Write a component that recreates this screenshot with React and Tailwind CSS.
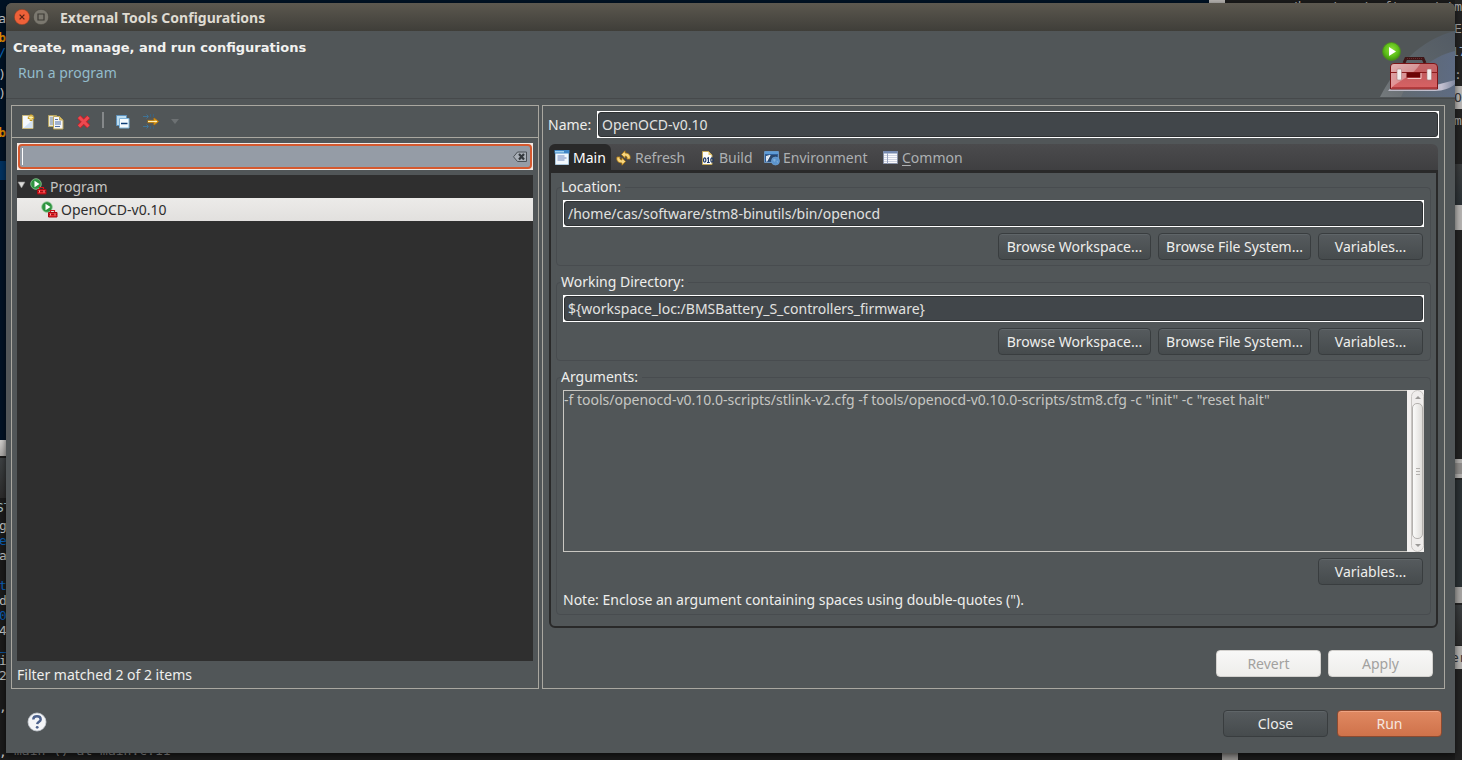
import React, { useState } from "react";

/* ---------- desktop behind the dialog ---------- */

function Backdrop() {
  return (
    <div aria-hidden="true" className="absolute inset-0 overflow-hidden bg-[#1b1b1b] font-['DejaVu_Sans_Mono','monospace'] text-[13px] leading-4">
      <div className="absolute left-0 top-0 h-[440px] w-[1209px] bg-[#001224]" />
      <div className="absolute left-[1209px] top-0 h-2 w-4 bg-[#b5b2af]" />
      <div className="absolute left-0 top-[161px] h-[19px] w-2 bg-[#003260]" />
      <div className="absolute left-0 top-[440px] h-4 w-2 bg-linear-to-b from-[#d2d0ce] to-[#a9a7a5]" />
      <div className="absolute left-0 top-[458px] h-[40px] w-2 bg-linear-to-b from-[#3d4143] to-[#2c2c2c]" />
      <div className="absolute left-0 top-[652px] h-px w-2 bg-[#0b4f94]" />
      <div className="absolute inset-y-0 left-0 w-[6px] overflow-hidden">
        <div className="absolute right-0 top-[11px] text-[#c9c9c9]">a</div>
        <div className="absolute right-0 top-[30px] font-bold text-[#e08a00]">b</div>
        <div className="absolute right-0 top-[45px] text-[#0b66b8]">/</div>
        <div className="absolute right-0 top-[67px] text-[#c9c9c9]">)</div>
        <div className="absolute right-0 top-[86px] text-[#c9c9c9]">)</div>
        <div className="absolute right-0 top-[125px] font-bold text-[#e08a00]">b</div>
        <div className="absolute -left-1 top-[500px] text-[#a8c3c9]">ST</div>
        <div className="absolute -left-px top-[518px] text-[#c4c4c4]">g</div>
        <div className="absolute -left-px top-[533px] text-[#0a5fb4]">e</div>
        <div className="absolute -left-px top-[548px] text-[#c4c4c4]">a</div>
        <div className="absolute -left-px top-[578px] text-[#0a5fb4]">t</div>
        <div className="absolute -left-px top-[593px] text-[#c4c4c4]">d</div>
        <div className="absolute -left-px top-[608px] text-[#0a5fb4]">0</div>
        <div className="absolute -left-px top-[623px] text-[#c4c4c4]">4</div>
        <div className="absolute -left-px top-[653px] text-[#c4c4c4]">i</div>
        <div className="absolute -left-px top-[668px] text-[#c4c4c4]">2</div>
        <div className="absolute -left-px top-[699px] text-[#c4c4c4]">,</div>
        <div className="absolute -left-px top-[744px] text-[#c4c4c4]">,</div>
      </div>
      <div className="absolute left-[14px] top-[743px] whitespace-pre text-[#8b8b8b]">main () at main.c:11</div>
      <div className="absolute left-[1222px] top-[752px] h-2 w-4 bg-[#8d8b89]" />
      <div className="absolute inset-y-0 right-0 w-[7px] overflow-hidden bg-[#232323]">
        <div className="absolute inset-x-0 top-[86px] h-[23px] bg-[#b9b6b4]" />
        <div className="absolute inset-x-0 top-[164px] h-[41px] bg-linear-to-b from-[#3a3c3d] to-[#2b3135]" />
        <div className="absolute inset-x-0 top-[205px] h-[25px] bg-[#b4b2b0]" />
        <div className="absolute inset-x-0 top-[459px] h-[19px] border-y-4 border-[#b0aeac] bg-[#8f8d8b]" />
        <div className="absolute inset-x-0 top-[480px] h-[107px] bg-[#2b3134]" />
        <div className="absolute inset-x-0 top-[587px] h-4 bg-[#a5a3a1]" />
        <div className="absolute inset-x-0 top-[605px] h-[40px] bg-linear-to-b from-[#3a3d3f] to-[#2b2b2b]" />
        <div className="absolute inset-x-0 top-[646px] h-[23px] bg-[#b4b2b0]" />
        <div className="absolute -left-px top-[21px] text-[#a8a8a8]">E</div>
        <div className="absolute -left-1 top-[44px] text-[#8fa9c4]">17</div>
        <div className="absolute -left-px top-[67px] text-[#a8a8a8]">:</div>
        <div className="absolute -left-px top-[90px] text-[#33373a]">O</div>
        <div className="absolute -left-px top-[113px] text-[#a8a8a8]">m</div>
        <div className="absolute -left-1 top-[650px] text-[#33373a]">er</div>
      </div>
      <div className="absolute left-[1290px] top-[-1px] whitespace-pre text-[#a8a8a8]">/home/cas/software/stm</div>
    </div>
  );
}

/* ---------- icons ---------- */

const NewIcon = () => (
  <svg width="16" height="16" viewBox="0 0 16 16">
    <path d="M2.500 1.500h10.500v13h-10.500z" fill="#f6f9fd" stroke="#c9b77a" />
    <path d="M3.500 14h9V6z" fill="#d3e2f4" />
    <path d="M11 .5v6.500M7.800 3.700h6.400" stroke="#c99a1c" strokeWidth="2.600" />
    <path d="M11 1.500v4.500M8.800 3.700h4.400" stroke="#fff2a8" strokeWidth="1.200" />
  </svg>
);

const CopyIcon = () => (
  <svg width="16" height="16" viewBox="0 0 16 16">
    <path d="M.5 1.500h8v11h-8z" fill="#e9e6d4" stroke="#b8a663" />
    <path d="M2 4h3M2 6h3M2 8h3M2 10h3" stroke="#6e88b8" />
    <path d="M5.500 2.500h6l3.500 3.500v9h-9.500z" fill="#f5f6fa" stroke="#c0a85a" />
    <path d="M11.500 2.500v3.500H15z" fill="#e6c66a" stroke="#c0a85a" />
    <path d="M7 5.500h3M7 8h6M7 10h6M7 12.500h5" stroke="#4f6ea8" />
  </svg>
);

const DeleteIcon = () => (
  <svg width="16" height="16" viewBox="0 0 16 16">
    <path d="M3 3 12.500 12.500M12.500 3 3 12.500" stroke="#c0242b" strokeWidth="4.600" />
    <path d="M3 3 12.500 12.500M12.500 3 3 12.500" stroke="#ee4950" strokeWidth="3" />
  </svg>
);

const CollapseIcon = () => (
  <svg width="16" height="16" viewBox="0 0 16 16">
    <path d="M2.500 1.500h10v10h-10z" fill="#bcdcf0" stroke="#5f93bd" />
    <path d="M5.500 4.500h9.500v9.500h-9.500z" fill="#f4fbff" stroke="#7fb4da" />
    <path d="M7 9.500h6.500" stroke="#0d3f78" strokeWidth="1.500" />
  </svg>
);

const FilterIcon = () => (
  <svg width="18" height="16" viewBox="0 0 18 16" fill="none">
    <path d="M1 2.500h5M4.500 .5l2 2-2 2M1 12.500h5M4.500 10.500l2 2-2 2" stroke="#3f7396" />
    <path d="M8.500 0v3M11.500 0v3M8.500 12v3M11.500 12v3" stroke="#3b617c" />
    <path d="M5.500 7.500h8" stroke="#b87a0c" strokeWidth="3.200" />
    <path d="M12 4 16.500 7.500 12 11z" fill="#e8a21c" stroke="#b87a0c" />
    <path d="M6 7.500h9" stroke="#fff0b8" strokeWidth="1.200" />
  </svg>
);

const RunToolIcon = () => (
  <svg width="17" height="17" viewBox="0 0 17 17">
    <circle cx="6" cy="6" r="5.300" fill="#2f9440" stroke="#8fc997" strokeWidth=".8" />
    <path d="M4.500 2.800 9.500 6 4.500 9.200z" fill="#fff" />
    <path d="M9.500 11V9.500h4V11" stroke="#d3161d" fill="none" strokeWidth="1.200" />
    <path d="M7.500 11.500h8.500v4.500H7.500z" fill="#e8262c" stroke="#a80b12" />
    <path d="M8 13.500h8" stroke="#8e090f" strokeWidth=".8" />
    <path d="M9.500 12.500v2M14 12.500v2" stroke="#ff9d9d" />
  </svg>
);

const MainTabIcon = () => (
  <svg width="16" height="16" viewBox="0 0 16 16">
    <path d="M1.500 1.500h13v13h-13z" fill="#f2f8fd" stroke="#a9c6dc" />
    <path d="M.5 0h15v3.500H.5z" fill="#3f86c6" />
    <path d="M1 1h9v1.500H1z" fill="#9fd0ef" />
    <path d="M3.500 6h7M3.500 8h9M3.500 10h7" stroke="#6f87bd" />
  </svg>
);

const RefreshIcon = () => (
  <svg width="16" height="16" viewBox="0 0 16 16">
    <path d="M5.500 4.500 9 .8v2.200c4 .2 5.800 2.500 5 6H11c.5-1.900-.2-2.900-2-3v2.200z" fill="#f6d57e" stroke="#b87d12" strokeWidth=".8" />
    <path d="M9.500 11.500 6 15.200V13c-4-.2-5.800-2.500-5-6h3c-.5 1.900.2 2.900 2 3V7.800z" fill="#f6d57e" stroke="#b87d12" strokeWidth=".8" />
  </svg>
);

const BuildIcon = () => (
  <svg width="16" height="16" viewBox="0 0 16 16">
    <path d="M2.500 1.500h6l3.500 3.500v9.500h-9.500z" fill="#fdfdfb" stroke="#c4a95a" />
    <path d="M8.500 1.500v3.500h3.500z" fill="#e6c66a" />
    <ellipse cx="4.700" cy="10" rx="1.200" ry="2.200" fill="none" stroke="#1d3768" strokeWidth="1.200" />
    <path d="M7.200 8.500l1.200-.7v4.700M7 12.500h2.800" fill="none" stroke="#1d3768" strokeWidth="1.200" />
    <ellipse cx="12" cy="10" rx="1.200" ry="2.200" fill="none" stroke="#1d3768" strokeWidth="1.200" />
  </svg>
);

const EnvIcon = () => (
  <svg width="16" height="16" viewBox="0 0 16 16">
    <path d="M.5 1.500h14v11H.5z" fill="#2f5f9a" stroke="#6d93bb" />
    <path d="M1 1.500h13v2.500H1z" fill="#5d9bd6" />
    <path d="M2 5h11v6.500H2z" fill="#28466c" />
    <path d="M2 11.500V6l3.500-1z" fill="#dfe9f4" />
    <path d="M2.500 11.500 6 5" stroke="#f4f8fc" strokeWidth="1.300" />
    <circle cx="11.500" cy="11" r="4" fill="#5b93cc" stroke="#6ea2d4" strokeWidth=".7" />
    <path d="M9 9.500c2-1.500 3-.5 2.500 1s-1.500 1.500-2 .5zM12.500 11.500c1.500-.5 2 0 1.500 1.500z" fill="#7fb0da" />
  </svg>
);

const CommonIcon = () => (
  <svg width="16" height="16" viewBox="0 0 16 16">
    <path d="M.5 1.500h14v12H.5z" fill="#fafafc" stroke="#8a93a8" />
    <path d="M.5 1h14v2.500H.5z" fill="#7488ae" />
    <path d="M1 5.500h13M1 7.500h13M1 9.500h13M1 11.500h13" stroke="#cfd4e2" />
    <path d="M4.500 3v10.500" stroke="#9aa5c0" />
  </svg>
);

const ClearIcon = () => (
  <svg width="16" height="12" viewBox="0 0 16 12">
    <path d="M5.500 1h9v9.500h-9L1.500 5.800z" fill="#a9afb7" stroke="#4a5056" />
    <path d="M7 3l5 5.500M12 3 7 8.500" stroke="#33383d" strokeWidth="2.200" />
  </svg>
);

const HelpIcon = () => (
  <svg width="20" height="20" viewBox="0 0 20 20">
    <circle cx="10" cy="10" r="9" fill="#f4f5f7" stroke="#c5cad2" strokeWidth=".8" />
    <path d="M6.300 7.500C6.300 5.300 8 4.300 10 4.300s3.700 1.100 3.700 3.100c0 2.300-3.200 2.300-3.500 4.700" fill="none" stroke="#4d628c" strokeWidth="2.400" />
    <circle cx="10.200" cy="15.300" r="1.400" fill="#4d628c" />
  </svg>
);

const ToolboxArt = () => (
  <svg width="75" height="66" viewBox="0 0 75 66">
    <defs>
      <linearGradient id="sweep" x1="0" y1="1" x2="1" y2="0">
        <stop offset="0" stopColor="#7e8386" />
        <stop offset=".5" stopColor="#5f676d" />
        <stop offset="1" stopColor="#535c68" />
      </linearGradient>
      <linearGradient id="sweep2" x1="0" y1="0" x2="1" y2="0">
        <stop offset="0" stopColor="#5f6870" />
        <stop offset="1" stopColor="#5f6e8a" />
      </linearGradient>
      <linearGradient id="box" x1="0" y1="0" x2="0" y2="1">
        <stop offset="0" stopColor="#c2686a" />
        <stop offset=".4" stopColor="#c45c5f" />
        <stop offset="1" stopColor="#d96264" />
      </linearGradient>
      <linearGradient id="gloss" x1="0" y1="0" x2="1" y2="1">
        <stop offset="0" stopColor="#fff" stopOpacity=".5" />
        <stop offset="1" stopColor="#fff" stopOpacity=".15" />
      </linearGradient>
      <linearGradient id="shine" x1="0" y1="0" x2="1" y2="0">
        <stop offset="0" stopColor="#b9b9c4" />
        <stop offset=".8" stopColor="#c3c0d0" />
        <stop offset="1" stopColor="#7f88a0" />
      </linearGradient>
      <radialGradient id="ball" cx=".5" cy=".4" r=".6">
        <stop offset="0" stopColor="#8fe03c" />
        <stop offset=".6" stopColor="#5fc01a" />
        <stop offset="1" stopColor="#3d8f10" />
      </radialGradient>
    </defs>
    <path d="M0 66C14 38 40 8 75 0v66z" fill="url(#sweep)" opacity=".8" />
    <path d="M21 66C30 44 50 26 75 20v46z" fill="url(#sweep2)" opacity=".8" />
    <path d="M8 60 12 55 56 54 75 49v4c-4 4-12 7-20 7z" fill="url(#shine)" />
    <path d="M24 32 26 27.500h17l2 4.500" fill="none" stroke="#3e1718" strokeWidth="3" />
    <path d="M27 27.500h16" stroke="#6c2d2f" strokeDasharray="1 1" />
    <path d="M10.500 58V36q0-3.500 3.500-3.500h40q3.500 0 3.500 3.500v22z" fill="url(#box)" stroke="#7c1416" />
    <path d="M11 45V36q0-3 3-3h26C34 44 20 49 11 57z" fill="url(#gloss)" />
    <path d="M11 41.500h47" stroke="#8c1c1e" />
    <path d="M12 56.500h45" stroke="#b33c3e" />
    <path d="M26.500 41.500h14v5h-14z" fill="#6c0406" />
    <path d="M27.500 47.500h13.500V42" fill="none" stroke="#f3c9c9" />
    <rect x="17" y="38" width="4.500" height="11" rx="1" fill="#f1eeee" stroke="#a87a7b" strokeWidth=".6" />
    <rect x="47" y="38" width="4.500" height="11" rx="1" fill="#f1eeee" stroke="#a87a7b" strokeWidth=".6" />
    <circle cx="11.500" cy="20.500" r="9" fill="url(#ball)" stroke="#4c8a20" strokeWidth=".8" />
    <path d="M9 16 16 20.500 9 25z" fill="#fff" />
  </svg>
);

/* ---------- shared controls ---------- */

function DarkButton({ className = "", children }) {
  return (
    <button
      type="button"
      className={`h-[27px] rounded-[4px] border border-[#393d3f] bg-linear-to-b from-[#565b5e] to-[#464b4d] text-center text-[#eeeeec] shadow-[inset_0_1px_0_#5f6568] ${className}`}
    >
      {children}
    </button>
  );
}

function TextField({ id, value, className = "" }) {
  return (
    <div className={`flex h-[27px] min-w-0 border border-white bg-white ${className}`}>
      <input
        id={id}
        type="text"
        defaultValue={value}
        className="w-full min-w-0 rounded-[3px] border border-[#2e3133] bg-[#41464a] px-[3px] text-[#e2e2e0] outline-none"
      />
    </div>
  );
}

function Group({ id, title, children }) {
  return (
    <fieldset className="min-w-0 rounded-[4px] border border-[#484c4f] px-[6px] pb-[5px] pt-[3px]">
      <legend className="-ml-[2px] h-5 pr-1 text-[#eeeeec]">
        <label htmlFor={id}>{title}</label>
      </legend>
      {children}
    </fieldset>
  );
}

function PathGroup({ id, title, value }) {
  return (
    <Group id={id} title={title}>
      <TextField id={id} value={value} />
      <div className="mt-[6px] flex justify-end gap-[7px] pr-px">
        <DarkButton className="w-[153px]">Browse Workspace...</DarkButton>
        <DarkButton className="w-[153px]">Browse File System...</DarkButton>
        <DarkButton className="w-[105px]">Variables...</DarkButton>
      </div>
    </Group>
  );
}

function ScrollBar() {
  return (
    <div className="flex w-[17px] shrink-0 flex-col bg-[#f2f0ef] pl-1">
      <div className="flex flex-1 flex-col rounded-full border border-[#c9c6c3] bg-[#efedec]">
        <div className="flex h-3 items-center justify-center">
          <svg width="6" height="3" viewBox="0 0 6 3"><path d="M3 0l3 3H0z" fill="#9c9a98" /></svg>
        </div>
        <div className="flex flex-1 flex-col items-center justify-center gap-[2px] rounded-[5px] border border-[#b4b1ae] bg-linear-to-r from-[#fbfbfa] to-[#e0dedb]">
          <span className="h-px w-1 bg-[#b4b1ae]" />
          <span className="h-px w-1 bg-[#b4b1ae]" />
          <span className="h-px w-1 bg-[#b4b1ae]" />
        </div>
        <div className="flex h-3 items-center justify-center">
          <svg width="6" height="3" viewBox="0 0 6 3"><path d="M0 0h6L3 3z" fill="#9c9a98" /></svg>
        </div>
      </div>
    </div>
  );
}

/* ---------- panes ---------- */

function ConfigList() {
  return (
    <section className="flex w-[528px] shrink-0 flex-col border border-[#a9a7a0]">
      <div className="flex h-8 shrink-0 items-center gap-3 border-b border-[#a9a7a0] pl-2">
        <button type="button" aria-label="New"><NewIcon /></button>
        <button type="button" aria-label="Duplicate"><CopyIcon /></button>
        <button type="button" aria-label="Delete"><DeleteIcon /></button>
        <span className="-mx-[2px] mb-1 h-4 w-[2px] bg-[#85888a]" />
        <button type="button" aria-label="Collapse all"><CollapseIcon /></button>
        <button type="button" aria-label="Filter"><FilterIcon /></button>
        <button type="button" aria-label="Filter menu" className="-ml-[2px]">
          <svg width="10" height="6" viewBox="0 0 10 6"><path d="M1 0h8L5 5z" fill="#6d7173" /></svg>
        </button>
      </div>
      <div className="flex flex-1 flex-col px-[5px] pt-[5px]">
        <div className="flex h-[27px] shrink-0 border border-[#f4e9e4] bg-[#f4e9e4]">
          <div className="flex flex-1 items-center rounded-[4px] border-2 border-[#d5592f] bg-[#959ca6] pr-[2px]">
            <span className="ml-[2px] h-[17px] w-px bg-white" />
            <input aria-label="Filter" type="text" className="min-w-0 flex-1 bg-transparent outline-none" />
            <button type="button" aria-label="Clear"><ClearIcon /></button>
          </div>
        </div>
        <ul className="mt-[5px] flex-1 bg-[#2f2f2f]">
          <li>
            <div className="flex h-[23px] items-center text-[#c4c4c2]">
              <svg width="9" height="8" viewBox="0 0 9 8" className="mb-1"><path d="M1 1h7L4.500 7z" fill="#dcdcda" stroke="#8b8b89" strokeWidth=".6" /></svg>
              <span className="ml-1"><RunToolIcon /></span>
              <span className="ml-[3px]">Program</span>
            </div>
            <ul>
              <li className="flex h-[23px] items-center bg-linear-to-b from-[#ecebe9] to-[#e2e0de] pl-6 text-[#2e2e2e]">
                <RunToolIcon />
                <span className="ml-[3px]">OpenOCD-v0.10</span>
              </li>
            </ul>
          </li>
        </ul>
        <p className="flex h-[27px] items-center text-[#eeeeec]">Filter matched 2 of 2 items</p>
      </div>
    </section>
  );
}

const TABS = [
  { name: "Main", icon: MainTabIcon, width: "w-[62px]" },
  { name: "Refresh", icon: RefreshIcon, width: "w-[84px]" },
  { name: "Build", icon: BuildIcon, width: "w-[64px]" },
  { name: "Environment", icon: EnvIcon, width: "w-[119px]" },
  { name: "Common", icon: CommonIcon, width: "w-[90px]", mnemonic: true },
];

function TabStrip() {
  const [active, setActive] = useState("Main");
  return (
    <div role="tablist" className="flex h-[26px] shrink-0 rounded-t-[6px] bg-linear-to-b from-[#4b4b4d] to-[#3f3f41]">
      {TABS.map(({ name, icon: Icon, width, mnemonic }) => (
        <button
          key={name}
          type="button"
          role="tab"
          aria-selected={active === name}
          onClick={() => setActive(name)}
          className={`flex items-center gap-[3px] pt-px pl-[5px] ${width} ${active === name ? "rounded-t-[6px] bg-[#292929] text-white" : "text-[#adb0b2]"}`}
        >
          <Icon />
          {mnemonic ? <span><u className="underline-offset-2">{name[0]}</u>{name.slice(1)}</span> : <span>{name}</span>}
        </button>
      ))}
    </div>
  );
}

function ConfigEditor() {
  return (
    <section className="flex min-w-0 flex-1 flex-col border border-[#a9a7a0] px-[5px] pt-[5px] pb-[11px]">
      <div className="flex items-center gap-[5px]">
        <label htmlFor="cfg-name" className="w-11 text-[#eeeeec]">Name:</label>
        <TextField id="cfg-name" value="OpenOCD-v0.10" className="flex-1" />
      </div>
      <div className="mt-[6px] ml-px mr-px flex flex-1 flex-col">
        <TabStrip />
        <div className="flex flex-1 flex-col gap-[6px] rounded-b-[6px] border-2 border-t-[3px] border-[#292929] px-[5px] pt-1 pb-[11px]">
          <PathGroup id="location" title="Location:" value="/home/cas/software/stm8-binutils/bin/openocd" />
          <PathGroup id="workdir" title="Working Directory:" value="${workspace_loc:/BMSBattery_S_controllers_firmware}" />
          <Group id="arguments" title="Arguments:">
            <div className="flex h-[162px]">
              <textarea
                id="arguments"
                className="min-w-0 flex-1 resize-none overflow-hidden border border-r-0 border-[#c9c7c2] bg-transparent leading-[18px] text-[#c6c6c3] outline-none"
                defaultValue={'-f tools/openocd-v0.10.0-scripts/stlink-v2.cfg -f tools/openocd-v0.10.0-scripts/stm8.cfg -c "init" -c "reset halt"'}
              />
              <ScrollBar />
            </div>
            <div className="mt-[6px] flex justify-end pr-px">
              <DarkButton className="w-[105px]">Variables...</DarkButton>
            </div>
            <p className="mt-[6px] leading-[18px] text-[#eeeeec]">Note: Enclose an argument containing spaces using double-quotes (").</p>
          </Group>
        </div>
      </div>
      <div className="mt-[22px] flex justify-end gap-[7px] pr-[6px]">
        <button type="button" disabled className="h-[27px] w-[105px] rounded-[4px] border border-[#d3d1ce] bg-linear-to-b from-[#f8f8f7] to-[#eeedeb] text-[#a2a19f]">Revert</button>
        <button type="button" disabled className="h-[27px] w-[105px] rounded-[4px] border border-[#d3d1ce] bg-linear-to-b from-[#f8f8f7] to-[#eeedeb] text-[#a2a19f]">Apply</button>
      </div>
    </section>
  );
}

export default function App() {
  return (
    <div className="relative flex min-h-screen flex-col pt-[3px] pr-[7px] pb-[7px] pl-[6px] font-['Noto_Sans','Liberation_Sans',sans-serif] text-[14px] leading-5">
      <Backdrop />
      <main className="relative flex flex-1 flex-col rounded-t-[6px] bg-[#515658] shadow-[0_2px_6px_rgba(0,0,0,0.6)]">
        <header className="flex h-7 shrink-0 items-center rounded-t-[6px] bg-linear-to-b from-[#5c584f] to-[#3f3e39] pl-2">
          <button type="button" aria-label="Close window">
            <svg width="16" height="16" viewBox="0 0 16 16">
              <circle cx="8" cy="8" r="7.700" fill="#ee6139" stroke="#7a3a22" strokeWidth=".5" />
              <path d="M5.600 5.600l4.800 4.800M10.400 5.600l-4.800 4.800" stroke="#5a2314" strokeWidth="1.300" />
            </svg>
          </button>
          <button type="button" aria-label="Maximize window" className="ml-[3px]">
            <svg width="16" height="16" viewBox="0 0 16 16">
              <circle cx="8" cy="8" r="7.700" fill="#7b786f" stroke="#3c3a35" strokeWidth=".5" />
              <path d="M5 5h6v6H5z" fill="none" stroke="#3c3a35" strokeWidth="1.200" />
            </svg>
          </button>
          <h1 className="ml-[11px] pt-px font-bold text-[#dfdbd2]">External Tools Configurations</h1>
        </header>

        <div className="flex h-[68px] shrink-0 justify-between border-b border-[#46494b]">
          <div className="pt-[7px]">
            <h2 className="pl-[7px] font-['DejaVu_Sans',sans-serif] text-[13px] leading-5 font-bold text-[#f2f2f0]">Create, manage, and run configurations</h2>
            <p className="mt-[5px] pl-3 text-[#93bccb]">Run a program</p>
          </div>
          <ToolboxArt />
        </div>

        <div className="mt-[6px] mr-[10px] ml-[5px] flex flex-1 gap-[3px]">
          <ConfigList />
          <ConfigEditor />
        </div>

        <footer className="flex h-16 shrink-0 items-center pt-[5px] pr-[13px] pl-[21px]">
          <button type="button" aria-label="Help" className="mb-1"><HelpIcon /></button>
          <div className="ml-auto flex gap-[9px]">
            <DarkButton className="w-[105px]">Close</DarkButton>
            <button type="button" className="h-[27px] w-[105px] rounded-[4px] border border-[#8b4a30] bg-linear-to-b from-[#e08962] to-[#cf724a] text-[#f6e6df] shadow-[inset_0_1px_0_#eea382]">Run</button>
          </div>
        </footer>
      </main>
    </div>
  );
}
